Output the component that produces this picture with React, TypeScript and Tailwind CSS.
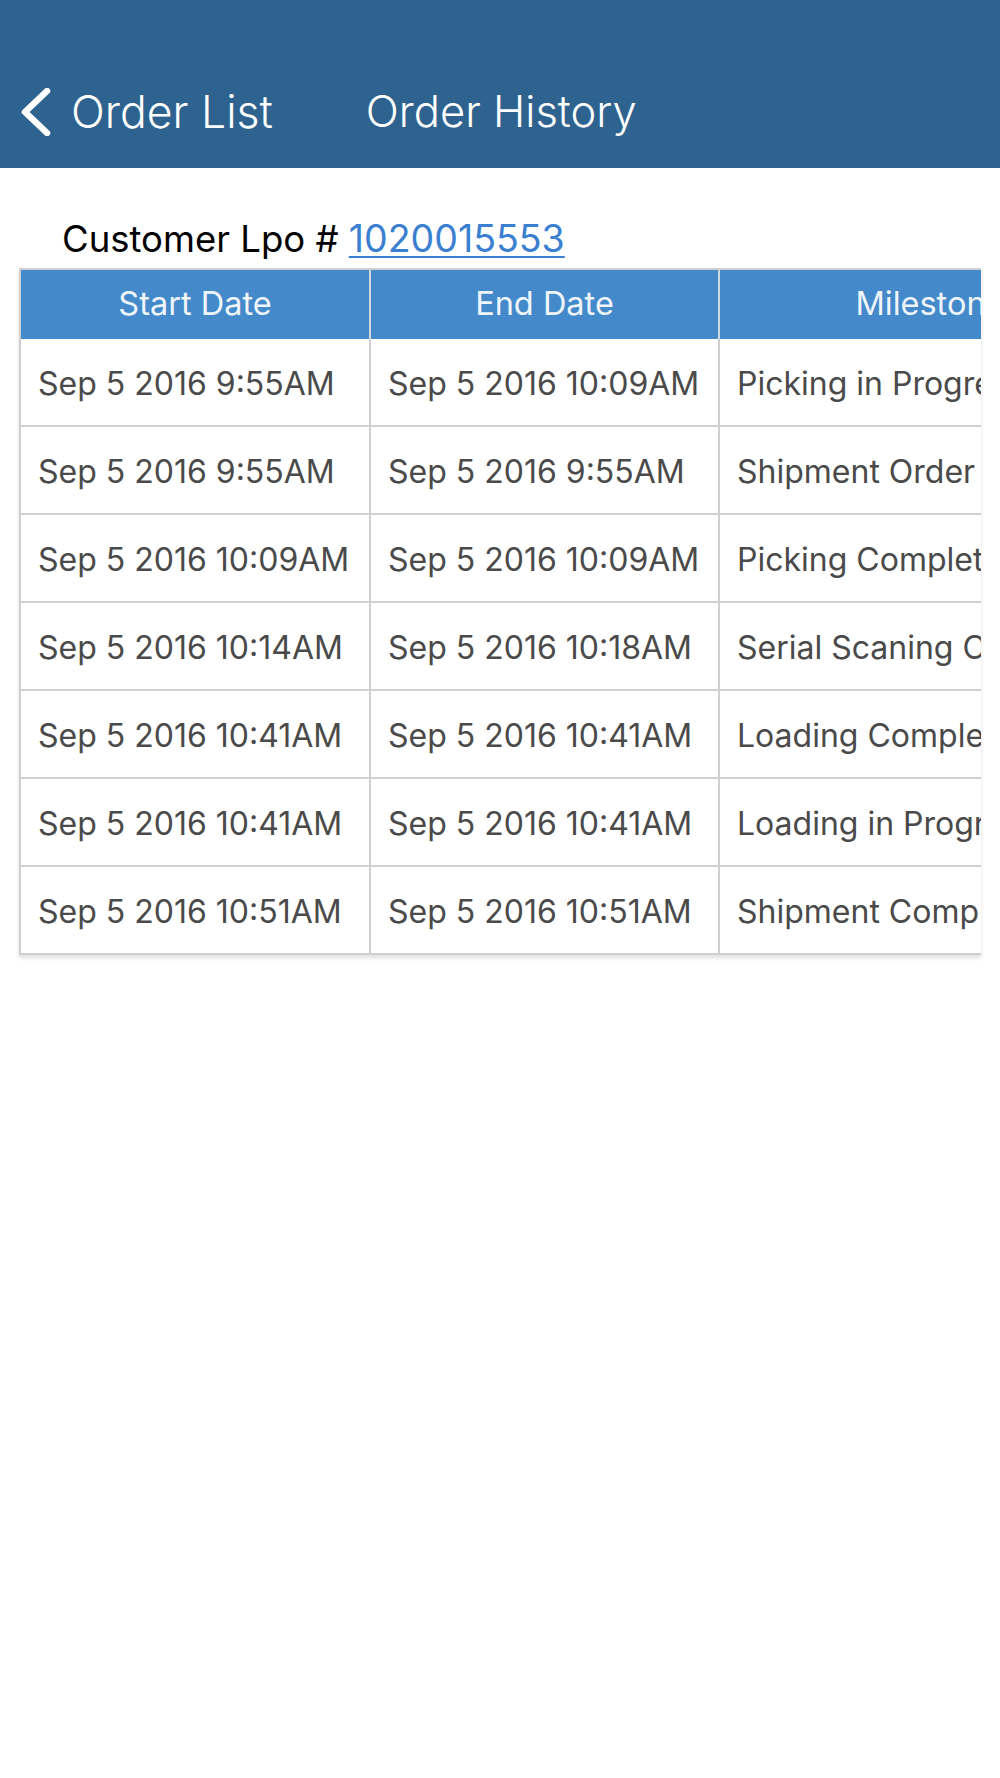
import React from "react";

const rows: [string, string, string][] = [
  ["Sep 5 2016 9:55AM", "Sep 5 2016 10:09AM", "Picking in Progress"],
  ["Sep 5 2016 9:55AM", "Sep 5 2016 9:55AM", "Shipment Order Created"],
  ["Sep 5 2016 10:09AM", "Sep 5 2016 10:09AM", "Picking Completed"],
  ["Sep 5 2016 10:14AM", "Sep 5 2016 10:18AM", "Serial Scaning Completed"],
  ["Sep 5 2016 10:41AM", "Sep 5 2016 10:41AM", "Loading Completed"],
  ["Sep 5 2016 10:41AM", "Sep 5 2016 10:41AM", "Loading in Progress"],
  ["Sep 5 2016 10:51AM", "Sep 5 2016 10:51AM", "Shipment Completed"],
];

export default function App() {
  return (
    <div
      className="w-[1000px] h-[1778px] bg-white overflow-hidden"
      style={{ fontFamily: "Inter, 'Liberation Sans', sans-serif" }}
    >
      <header className="h-[168px] bg-[#2e6390] flex items-center pt-[56px] text-white">
        <svg width="34" height="48" viewBox="0 0 34 48" className="ml-[19px]">
          <polyline
            points="28,3 6,24 28,45"
            fill="none"
            stroke="white"
            strokeWidth="6.5"
            strokeLinecap="round"
            strokeLinejoin="round"
          />
        </svg>
        <span className="ml-[18px] text-[44.5px] font-light">Order List</span>
        <span className="ml-[93px] text-[43.5px] font-light">Order History</span>
      </header>

      <div className="pl-[62px] pt-[52px] h-[100px] text-[36.5px] text-black leading-none">
        <span>Customer Lpo </span>
        <span># </span>
        <span className="text-[#3b7fd1] text-[37.5px] underline underline-offset-4 decoration-2">1020015553</span>
      </div>

      <div className="ml-[19px] w-[962px] overflow-hidden shadow-[0_3px_4px_rgba(0,0,0,0.12)]">
        <div className="w-[1140px] border-l-2 border-[#cfcfcf]">
          <div className="flex h-[71px] bg-[#4489c9] text-[#eef5fb] text-[32.5px] border-t-2 border-[#cfcfcf]">
            <div className="w-[350px] flex items-center justify-center border-r-2 border-[#cfd9e3]">Start Date</div>
            <div className="w-[349px] flex items-center justify-center border-r-2 border-[#cfd9e3]">End Date</div>
            <div className="w-[420px] flex items-center justify-center">Milestone</div>
          </div>
          {rows.map((r, i) => (
            <div
              key={i}
              className="flex h-[88px] text-[32px] text-[#4a4a4a] border-b-2 border-[#cfcfcf]"
            >
              <div className="w-[350px] flex items-center pl-[17px] pt-[3px] border-r-2 border-[#cfcfcf] whitespace-nowrap">{r[0]}</div>
              <div className="w-[349px] flex items-center pl-[17px] pt-[3px] border-r-2 border-[#cfcfcf] whitespace-nowrap">{r[1]}</div>
              <div className="w-[420px] flex items-center pl-[17px] pt-[3px] whitespace-nowrap">{r[2]}</div>
            </div>
          ))}
        </div>
      </div>
    </div>
  );
}
